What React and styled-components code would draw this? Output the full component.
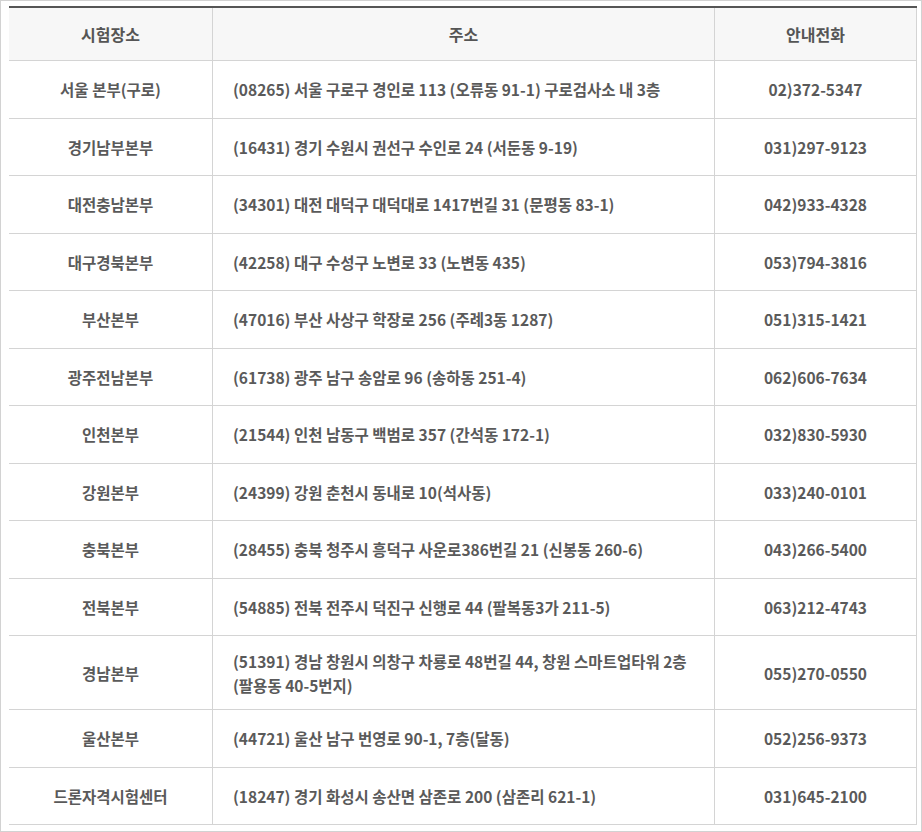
import React from "react";
import styled, { createGlobalStyle } from "styled-components";

const GlobalStyle = createGlobalStyle`
  html, body { margin: 0; padding: 0; background: #fff; }
  body { font-family: "Noto Sans CJK KR", "Noto Sans", sans-serif; }
`;

const Frame = styled.div`
  width: 922px;
  height: 832px;
  box-sizing: border-box;
  border: 1px solid #d2d2d2;
  padding: 5px 4px 6px 8px;
  overflow: hidden;
  background: #fff;
`;

const Table = styled.div`
  display: grid;
  grid-template-columns: 204px 502px 202px;
  width: 908px;
  border-top: 2px solid #555;
`;

const Cell = styled.div`
  box-sizing: border-box;
  display: flex;
  align-items: center;
  justify-content: ${(p) => (p.$left ? "flex-start" : "center")};
  text-align: ${(p) => (p.$left ? "left" : "center")};
  padding: 12.5px 20px;
  min-height: 57.5px;
  border-bottom: 1px solid #d4d4d4;
  border-right: 1px solid #d4d4d4;
  font-size: 15.5px;
  line-height: 24px;
  font-weight: 700;
  color: #5a5a5a;
  background: #fff;
  word-break: keep-all;
`;

const HeadCell = styled(Cell)`
  min-height: 53px;
  padding: 0 20px;
  background: #f7f7f7;
  font-size: 16px;
  color: #555;
`;

const rows = [
  ["서울 본부(구로)", "(08265) 서울 구로구 경인로 113 (오류동 91-1) 구로검사소 내 3층", "02)372-5347"],
  ["경기남부본부", "(16431) 경기 수원시 권선구 수인로 24 (서둔동 9-19)", "031)297-9123"],
  ["대전충남본부", "(34301) 대전 대덕구 대덕대로 1417번길 31 (문평동 83-1)", "042)933-4328"],
  ["대구경북본부", "(42258) 대구 수성구 노변로 33 (노변동 435)", "053)794-3816"],
  ["부산본부", "(47016) 부산 사상구 학장로 256 (주례3동 1287)", "051)315-1421"],
  ["광주전남본부", "(61738) 광주 남구 송암로 96 (송하동 251-4)", "062)606-7634"],
  ["인천본부", "(21544) 인천 남동구 백범로 357 (간석동 172-1)", "032)830-5930"],
  ["강원본부", "(24399) 강원 춘천시 동내로 10(석사동)", "033)240-0101"],
  ["충북본부", "(28455) 충북 청주시 흥덕구 사운로386번길 21 (신봉동 260-6)", "043)266-5400"],
  ["전북본부", "(54885) 전북 전주시 덕진구 신행로 44 (팔복동3가 211-5)", "063)212-4743"],
  ["경남본부", "(51391) 경남 창원시 의창구 차룡로 48번길 44, 창원 스마트업타워 2층 (팔용동 40-5번지)", "055)270-0550"],
  ["울산본부", "(44721) 울산 남구 번영로 90-1, 7층(달동)", "052)256-9373"],
  ["드론자격시험센터", "(18247) 경기 화성시 송산면 삼존로 200 (삼존리 621-1)", "031)645-2100"],
];

export default function App() {
  return (
    <>
      <GlobalStyle />
      <Frame>
        <Table>
          <HeadCell>시험장소</HeadCell>
          <HeadCell>주소</HeadCell>
          <HeadCell>안내전화</HeadCell>
          {rows.map(([name, addr, tel]) => (
            <React.Fragment key={name}>
              <Cell>{name}</Cell>
              <Cell $left>{addr}</Cell>
              <Cell>{tel}</Cell>
            </React.Fragment>
          ))}
        </Table>
      </Frame>
    </>
  );
}
